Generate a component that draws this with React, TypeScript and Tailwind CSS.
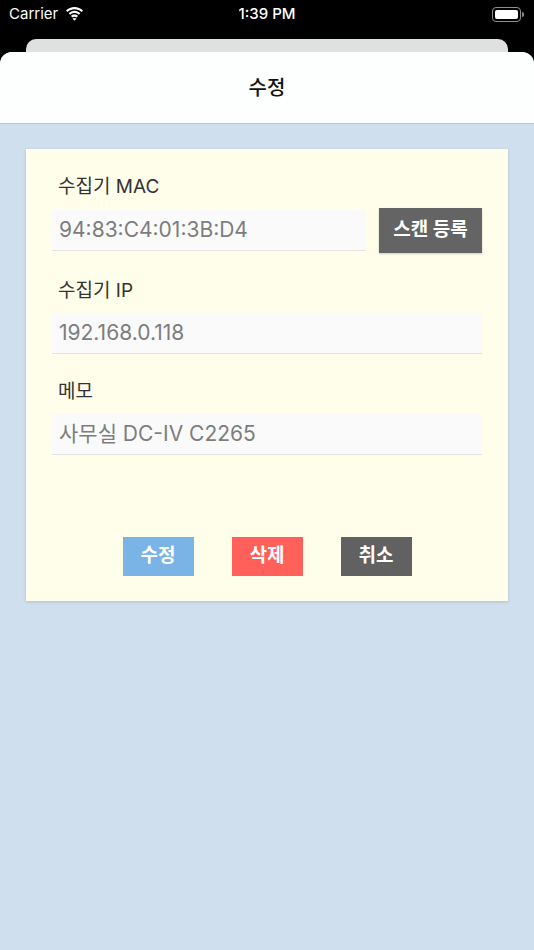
const ko = { fontFamily: 'Inter, "Noto Sans CJK KR", sans-serif' };

function Wifi() {
  return (
    <svg width="19" height="14" viewBox="0 0 19 14" fill="white">
      <path d="M9.5 2.2c2.7 0 5.2 1 7.1 2.8l1.4-1.5C15.7 1.3 12.7 0 9.5 0S3.3 1.3 1 3.5l1.4 1.5C4.3 3.2 6.8 2.2 9.5 2.2z" />
      <path d="M9.5 6c1.7 0 3.2.6 4.4 1.7l1.4-1.5C13.7 4.7 11.7 3.8 9.5 3.8S5.3 4.7 3.7 6.2l1.4 1.5C6.3 6.6 7.8 6 9.5 6z" />
      <path d="M9.5 9.7c.8 0 1.5.3 2 .8l1.5-1.5c-.9-.9-2.1-1.4-3.5-1.4S6.9 8.1 6 9l1.5 1.5c.5-.5 1.2-.8 2-.8z" />
      <path d="M9.5 13.8l2-2c-.5-.5-1.2-.8-2-.8s-1.5.3-2 .8z" />
    </svg>
  );
}

function Battery() {
  return (
    <div className="flex items-center">
      <div className="w-[29px] h-[15px] rounded-[4px] border border-[#8e8e8e] p-[2px]">
        <div className="h-full w-full rounded-[2px] bg-white" />
      </div>
      <div className="w-[2px] h-[5px] rounded-r-sm bg-[#8e8e8e] ml-[1px]" />
    </div>
  );
}

function Field({ label, value }: { label: string; value: string }) {
  return (
    <div className="mt-[26px]">
      <div className="pl-[6px] text-[19px] leading-[24px] text-[#333]">{label}</div>
      <div className="mt-[10px] h-[41px] bg-[#fafafa] border-b border-[#e3e3e3] flex items-center pl-[7px] text-[21px] text-[#7d7d7d]">
        {value}
      </div>
    </div>
  );
}

export default function App() {
  return (
    <div className="relative w-[534px] h-[950px] bg-black overflow-hidden" style={ko}>
      <div className="h-[28px] flex items-center justify-between px-[9px] text-white relative">
        <div className="flex items-center gap-[7px] text-[15px]">
          Carrier <Wifi />
        </div>
        <div className="absolute left-0 right-0 text-center text-[15px] font-medium">1:39 PM</div>
        <div className="pr-[1px]">
          <Battery />
        </div>
      </div>

      <div className="mt-[11px] mx-[26px] h-[20px] rounded-t-[10px] bg-[#dfe1e1]" />

      <div className="absolute left-0 right-0 top-[52px] bottom-0 rounded-t-[12px] bg-[#d0dfee] overflow-hidden">
        <div className="h-[72px] bg-[#fdfefe] border-b border-[#bcc6cf] flex items-center justify-center text-[20px] font-medium text-[#111]">
          수정
        </div>

        <div className="mx-[26px] mt-[25px] bg-[#fffeea] shadow-[0_1px_3px_rgba(0,0,0,0.15)] px-[26px] pt-px pb-[25px]">
          <div className="mt-[25px]">
            <div className="pl-[6px] text-[19px] leading-[24px] text-[#333]">수집기 MAC</div>
            <div className="mt-[9px] flex items-center gap-[13px]">
              <div className="flex-1 h-[41px] bg-[#fafafa] border-b border-[#e3e3e3] flex items-center pl-[7px] text-[21px] text-[#7d7d7d]">
                94:83:C4:01:3B:D4
              </div>
              <div className="w-[103px] h-[45px] bg-[#646464] text-white text-[19px] font-bold flex items-center justify-center shadow-[0_1px_2px_rgba(0,0,0,0.2)]">
                스캔 등록
              </div>
            </div>
          </div>
          <Field label="수집기 IP" value="192.168.0.118" />
          <Field label="메모" value="사무실 DC-IV C2265" />

          <div className="mt-[82px] flex justify-center gap-[38px]">
            <div className="w-[71px] h-[39px] bg-[#7ab4e6] text-white text-[19px] font-bold flex items-center justify-center">
              수정
            </div>
            <div className="w-[71px] h-[39px] bg-[#ff6059] text-white text-[19px] font-bold flex items-center justify-center">
              삭제
            </div>
            <div className="w-[71px] h-[39px] bg-[#616161] text-white text-[19px] font-bold flex items-center justify-center">
              취소
            </div>
          </div>
        </div>
      </div>
    </div>
  );
}
